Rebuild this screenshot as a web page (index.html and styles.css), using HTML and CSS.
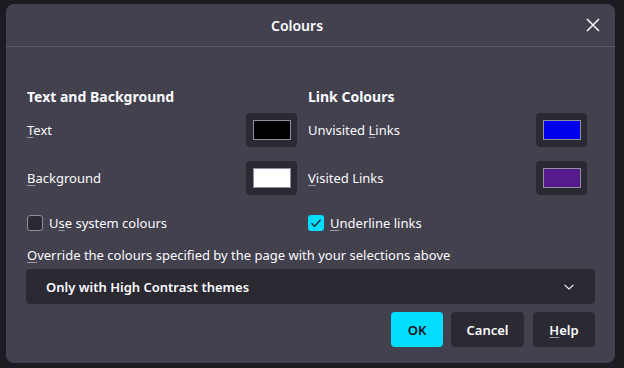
FILE: index.html
```html
<!DOCTYPE html>
<html lang="en">
<head>
    <meta charset="UTF-8">
    <title>Colours</title>
    <link rel="stylesheet" href="styles.css">
</head>
<body>
    <div class="dialog">
        <div class="dialog-header">
            <div class="dialog-title">Colours</div>
            <button class="close-button" aria-label="Close">
                <svg width="14" height="14" viewBox="0 0 14 14">
                    <path d="M1 1 L13 13 M13 1 L1 13" stroke="#fbfbfe" stroke-width="1.5" fill="none"/>
                </svg>
            </button>
        </div>

        <div class="dialog-body">
            <div class="columns">
                <div class="column">
                    <h2>Text and Background</h2>
                    <div class="colour-row">
                        <label><u>T</u>ext</label>
                        <button class="swatch-button"><span class="swatch swatch-black"></span></button>
                    </div>
                    <div class="colour-row">
                        <label><u>B</u>ackground</label>
                        <button class="swatch-button"><span class="swatch swatch-white"></span></button>
                    </div>
                    <div class="check-row">
                        <span class="checkbox"></span>
                        <label>U<u>s</u>e system colours</label>
                    </div>
                </div>

                <div class="column">
                    <h2>Link Colours</h2>
                    <div class="colour-row">
                        <label>Unvisited <u>L</u>inks</label>
                        <button class="swatch-button"><span class="swatch swatch-blue"></span></button>
                    </div>
                    <div class="colour-row">
                        <label><u>V</u>isited Links</label>
                        <button class="swatch-button"><span class="swatch swatch-purple"></span></button>
                    </div>
                    <div class="check-row">
                        <span class="checkbox checked">
                            <svg width="16" height="16" viewBox="0 0 16 16">
                                <path d="M3.5 8.2 L6.6 11.2 L12.6 4.8" stroke="#2b2a33" stroke-width="1.4" fill="none"/>
                            </svg>
                        </span>
                        <label><u>U</u>nderline links</label>
                    </div>
                </div>
            </div>

            <div class="override-label"><u>O</u>verride the colours specified by the page with your selections above</div>
            <div class="select">
                <span>Only with High Contrast themes</span>
                <svg width="12" height="8" viewBox="0 0 12 8">
                    <path d="M1.5 1.8 L6 6 L10.5 1.8" stroke="#fbfbfe" stroke-width="1.1" fill="none"/>
                </svg>
            </div>

            <div class="button-row">
                <button class="ok-button">OK</button>
                <button class="cancel-button">Cancel</button>
                <button class="help-button"><u>H</u>elp</button>
            </div>
        </div>
    </div>
</body>
</html>
```

FILE: styles.css
```css
body {
    margin: 0;
    padding: 4px 9px 5px 6px;
    background-color: #1c1b22;
    font-family: 'Noto Sans', sans-serif;
    color: #fbfbfe;
}

.dialog {
    background-color: #42414d;
    border-radius: 8px;
    height: 359px;
    display: flex;
    flex-direction: column;
}

.dialog-header {
    display: flex;
    align-items: center;
    height: 42px;
    border-bottom: 1px solid #5b5a66;
}

.dialog-title {
    flex: 1;
    text-align: center;
    padding-left: 8px;
    font-size: 14px;
    font-weight: 600;
}

.close-button {
    width: 26px;
    height: 26px;
    margin-right: 9px;
    padding: 0;
    border: none;
    background: none;
    display: flex;
    align-items: center;
    justify-content: center;
}

.dialog-body {
    padding: 40px 20px 0 20px;
}

.columns {
    display: grid;
    grid-template-columns: 271px 280px;
    column-gap: 10px;
}

.column {
    display: flex;
    flex-direction: column;
    padding-left: 1px;
}

h2 {
    margin: 0 0 6px 0;
    font-size: 14px;
    font-weight: 700;
    line-height: 20px;
}

.colour-row {
    display: flex;
    align-items: center;
    justify-content: space-between;
    height: 34px;
    margin-bottom: 14px;
    font-size: 13px;
}

u {
    text-decoration-color: #9a99a4;
    text-underline-offset: 2px;
}

.swatch-button {
    width: 51px;
    height: 34px;
    padding: 0;
    border: none;
    border-radius: 4px;
    background-color: #2b2a33;
    display: flex;
    align-items: center;
    justify-content: center;
}

.swatch {
    width: 36px;
    height: 18px;
    border: 1px solid #8f8f9d;
}

.swatch-black { background-color: #000000; }
.swatch-white { background-color: #ffffff; }
.swatch-blue { background-color: #0000ee; }
.swatch-purple { background-color: #551a8b; }

.check-row {
    display: flex;
    align-items: center;
    gap: 6px;
    height: 20px;
    margin-top: 4px;
    font-size: 13px;
}

.checkbox {
    width: 14px;
    height: 14px;
    border: 1px solid #8f8f9d;
    border-radius: 3px;
    background-color: #2b2a33;
    display: flex;
    align-items: center;
    justify-content: center;
}

.checkbox.checked {
    width: 16px;
    height: 16px;
    border: none;
    background-color: #00ddff;
}

.override-label {
    margin-top: 13px;
    padding-left: 1px;
    font-size: 13px;
    line-height: 18px;
}

.select {
    margin-top: 5px;
    height: 35px;
    border-radius: 4px;
    background-color: #2b2a33;
    display: flex;
    align-items: center;
    justify-content: space-between;
    padding: 0 20px 0 20px;
    font-size: 13px;
    font-weight: 600;
}

.button-row {
    display: flex;
    justify-content: flex-end;
    gap: 8px;
    margin-top: 8px;
}

.button-row button {
    height: 35px;
    padding: 0;
    border: none;
    border-radius: 4px;
    background-color: #2b2a33;
    color: #fbfbfe;
    font-family: 'Noto Sans', sans-serif;
    font-size: 13px;
    font-weight: 600;
}

.button-row .ok-button {
    width: 52px;
    background-color: #00ddff;
    color: #15141a;
}

.button-row .cancel-button {
    width: 73px;
}

.button-row .help-button {
    width: 62px;
    margin-left: 1px;
}
```
